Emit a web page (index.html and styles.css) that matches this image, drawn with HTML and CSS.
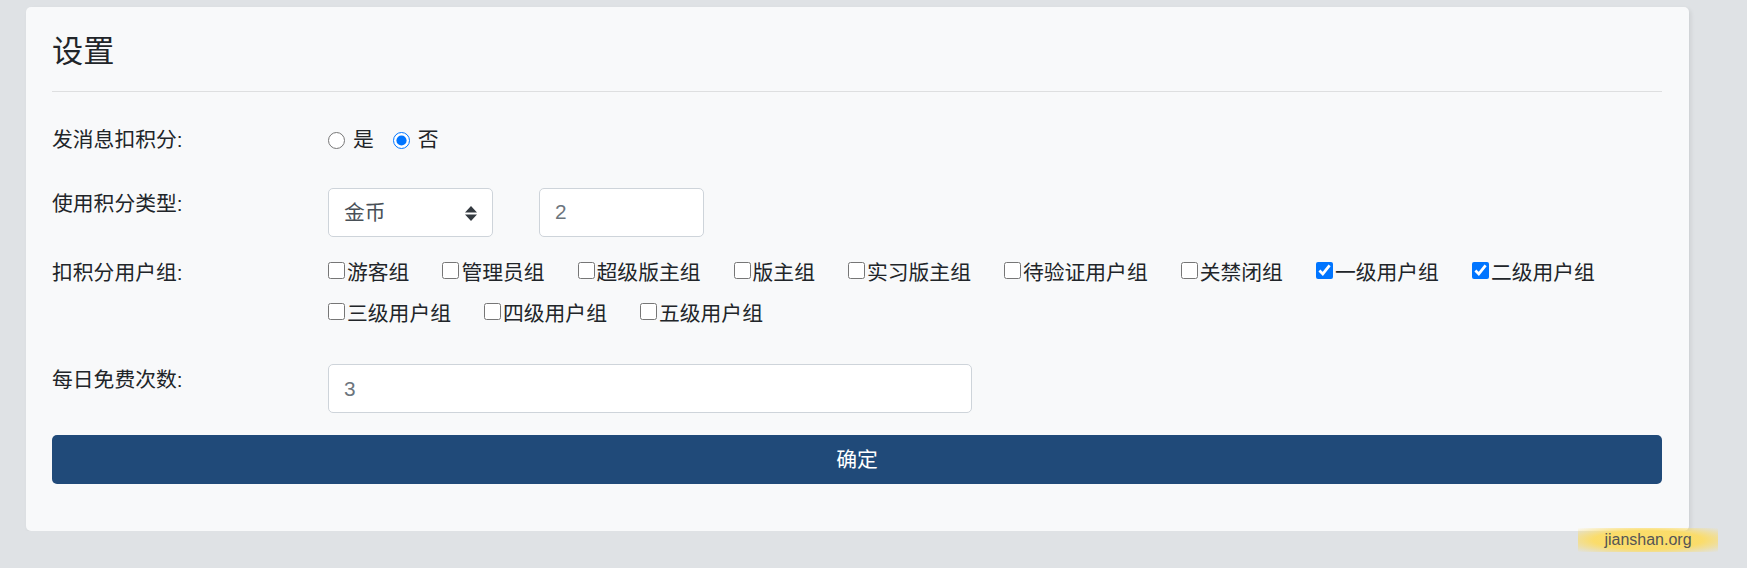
FILE: index.html
```html
<!DOCTYPE html>
<html lang="zh-CN">
<head>
    <meta charset="UTF-8">
    <meta name="viewport" content="width=device-width, initial-scale=1.0">
    <title>设置</title>
    <link rel="stylesheet" href="styles.css">
</head>
<body>
<div class="card">
    <h4 class="card-title">设置</h4>
    <hr>
    <form class="settings">
        <div class="form-row row-radio">
            <span class="label">发消息扣积分:</span>
            <div class="radios">
                <label class="radio"><input type="radio" name="deduct" value="1">是</label>
                <label class="radio"><input type="radio" name="deduct" value="0" checked>否</label>
            </div>
        </div>
        <div class="form-row row-type">
            <span class="label">使用积分类型:</span>
            <div class="inline-fields">
                <div class="select-wrap">
                    <select class="field select">
                        <option>金币</option>
                        <option>积分</option>
                    </select>
                    <svg class="select-arrow" width="12" height="15" viewBox="0 0 12 15">
                        <path d="M6 0L12 6.5H0z M6 15L0 8.5H12z" fill="#343a40"/>
                    </svg>
                </div>
                <input class="field small" type="text" placeholder="2">
            </div>
        </div>
        <div class="form-row row-groups">
            <span class="label">扣积分用户组:</span>
            <div class="checks">
                <label class="check"><input type="checkbox">游客组</label>
                <label class="check"><input type="checkbox">管理员组</label>
                <label class="check"><input type="checkbox">超级版主组</label>
                <label class="check"><input type="checkbox">版主组</label>
                <label class="check"><input type="checkbox">实习版主组</label>
                <label class="check"><input type="checkbox">待验证用户组</label>
                <label class="check"><input type="checkbox">关禁闭组</label>
                <label class="check"><input type="checkbox" checked>一级用户组</label>
                <label class="check"><input type="checkbox" checked>二级用户组</label>
                <label class="check"><input type="checkbox">三级用户组</label>
                <label class="check"><input type="checkbox">四级用户组</label>
                <label class="check"><input type="checkbox">五级用户组</label>
            </div>
        </div>
        <div class="form-row row-free">
            <span class="label">每日免费次数:</span>
            <div>
                <input class="field wide" type="text" placeholder="3">
            </div>
        </div>
        <button type="button" class="btn-submit">确定</button>
    </form>
</div>
<div class="watermark">jianshan.org</div>
</body>
</html>
```

FILE: styles.css
```css
body {
    margin: 0;
    background-color: #dfe2e5;
    font-family: "Liberation Sans", "Noto Sans CJK SC", sans-serif;
    color: #212529;
    font-size: 20.8px;
    line-height: 1.5;
}
.card {
    margin: 7px 58px 0 26px;
    padding: 26px 27px 47px 26px;
    background: #f8f9fa;
    border-radius: 5px;
    box-shadow: 2px 2px 4px rgba(0, 0, 0, 0.08);
}
.card-title {
    margin: 0;
    font-size: 31.2px;
    font-weight: 400;
    line-height: 1.2;
}
hr {
    margin: 21px 0 32px;
    border: 0;
    border-top: 1px solid rgba(0, 0, 0, 0.1);
}
.form-row {
    display: grid;
    grid-template-columns: 276px 1fr;
    align-items: start;
}
.label {
    line-height: 31.2px;
}
.row-radio { margin-bottom: 32px; }
.row-type { margin-bottom: 20px; }
.row-groups { margin-bottom: 35px; }
.row-free { margin-bottom: 22px; }

.radios {
    display: flex;
    align-items: center;
    height: 31.2px;
}
.radio {
    display: flex;
    align-items: center;
    margin-right: 19px;
}
.radio input {
    width: 17px;
    height: 17px;
    margin: 0 8px 0 0;
}

.inline-fields {
    display: flex;
    gap: 46px;
}
.field {
    box-sizing: border-box;
    height: 49px;
    padding: 0 15px;
    font: inherit;
    color: #495057;
    background: #fff;
    border: 1px solid #ced4da;
    border-radius: 5px;
    outline: none;
}
.field::placeholder {
    color: #6c757d;
}
.select-wrap {
    position: relative;
}
.select {
    width: 165px;
    appearance: none;
    -webkit-appearance: none;
}
.select-arrow {
    position: absolute;
    right: 16px;
    top: 18px;
    pointer-events: none;
}
.small { width: 165px; }
.wide { width: 644px; }

.checks {
    display: flex;
    flex-wrap: wrap;
    column-gap: 33px;
    row-gap: 10px;
}
.check {
    display: flex;
    align-items: center;
    height: 31.2px;
}
.check input {
    width: 17px;
    height: 17px;
    margin: 0 2px 3px 0;
}

.btn-submit {
    display: block;
    width: 100%;
    height: 49px;
    font: inherit;
    color: #fff;
    background: #204a79;
    border: 0;
    border-radius: 5px;
}

.watermark {
    position: absolute;
    left: 1578px;
    top: 528px;
    width: 140px;
    height: 24px;
    line-height: 24px;
    text-align: center;
    font-size: 16px;
    color: #555;
    background: radial-gradient(ellipse at center, rgba(252, 220, 100, 0.95) 55%, rgba(252, 220, 100, 0) 100%);
}
```
